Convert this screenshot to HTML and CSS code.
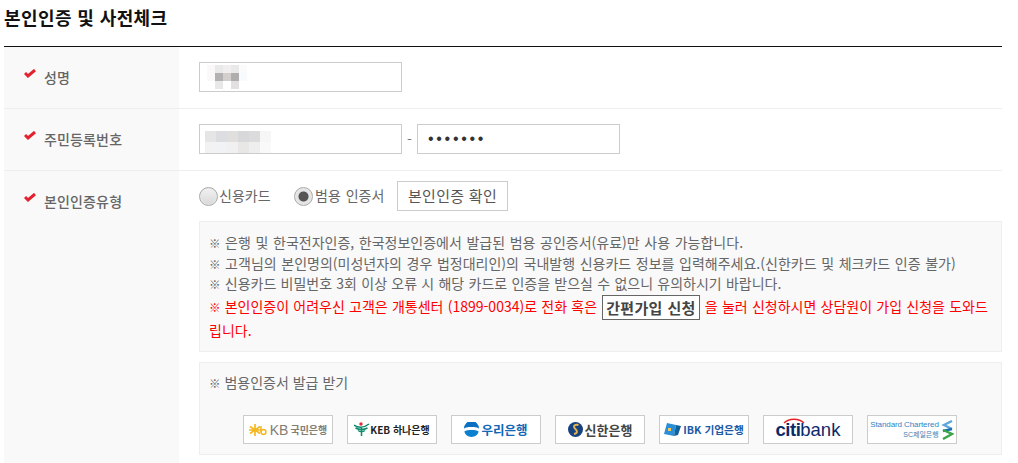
FILE: index.html
```html
<!DOCTYPE html>
<html lang="ko">
<head>
<meta charset="utf-8">
<title>본인인증 및 사전체크</title>
<link rel="stylesheet" href="styles.css">
</head>
<body>
<main class="page">
  <h2 class="title">본인인증 및 사전체크</h2>
  <section class="form">
    <div class="row row-short">
      <div class="label"><svg class="check" viewBox="0 0 12 9"><path d="M1 4l3 3L11 1" fill="none" stroke="#e2222e" stroke-width="3"/></svg><span>성명</span></div>
      <div class="field">
        <div class="input">
          <svg class="mosaic" width="54" height="24" viewBox="0 0 6 3" shape-rendering="crispEdges">
            <rect x="0" y="0" width="1" height="1" fill="#fbf8f9"/><rect x="1" y="0" width="1" height="1" fill="#e9e9ea"/><rect x="2" y="0" width="1" height="1" fill="#f0eeee"/><rect x="3" y="0" width="1" height="1" fill="#e9e9e9"/><rect x="4" y="0" width="1" height="1" fill="#fbfbfb"/>
            <rect x="0" y="1" width="1" height="1" fill="#fbf8f9"/><rect x="1" y="1" width="1" height="1" fill="#b3b1b2"/><rect x="2" y="1" width="1" height="1" fill="#d3cfcc"/><rect x="3" y="1" width="1" height="1" fill="#afadad"/><rect x="4" y="1" width="1" height="1" fill="#f7fbfd"/>
            <rect x="1" y="2" width="1" height="1" fill="#e8e8e8"/><rect x="3" y="2" width="1" height="1" fill="#e2e0e0"/>
          </svg>
        </div>
      </div>
    </div>
    <div class="row row-short">
      <div class="label"><svg class="check" viewBox="0 0 12 9"><path d="M1 4l3 3L11 1" fill="none" stroke="#e2222e" stroke-width="3"/></svg><span>주민등록번호</span></div>
      <div class="field">
        <div class="input">
          <svg class="mosaic-wide" width="66" height="22" viewBox="0 0 6 2" shape-rendering="crispEdges">
            <rect x="0" y="0" width="1" height="1" fill="#e6e5e6"/><rect x="1" y="0" width="1" height="1" fill="#dcdde1"/><rect x="2" y="0" width="1" height="1" fill="#e1dfdd"/><rect x="3" y="0" width="1" height="1" fill="#d8d8db"/><rect x="4" y="0" width="1" height="1" fill="#dbdadc"/><rect x="5" y="0" width="1" height="1" fill="#f6f6f7"/>
            <rect x="0" y="1" width="1" height="1" fill="#f3f2f3"/><rect x="1" y="1" width="1" height="1" fill="#f1f2f5"/><rect x="2" y="1" width="1" height="1" fill="#f0f0f0"/><rect x="3" y="1" width="1" height="1" fill="#e9e7e6"/><rect x="4" y="1" width="1" height="1" fill="#eeeeee"/><rect x="5" y="1" width="1" height="1" fill="#f9f9f9"/>
          </svg>
        </div>
        <span class="dash">-</span>
        <div class="input input-secret">•••••••</div>
      </div>
    </div>
    <div class="row row-tall">
      <div class="label"><svg class="check" viewBox="0 0 12 9"><path d="M1 4l3 3L11 1" fill="none" stroke="#e2222e" stroke-width="3"/></svg><span>본인인증유형</span></div>
      <div class="field-stack">
        <div class="choice">
          <label class="radio-item radio-first"><input class="radio" type="radio" name="auth"><span>신용카드</span></label>
          <label class="radio-item radio-second"><input class="radio" type="radio" name="auth" checked><span>범용 인증서</span></label>
          <button class="confirm" type="button">본인인증 확인</button>
        </div>
        <div class="notice">
          <p class="note-line"><span class="mark">※</span> 은행 및 한국전자인증, 한국정보인증에서 발급된 범용 공인증서(유료)만 사용 가능합니다.</p>
          <p class="note-line"><span class="mark">※</span> 고객님의 본인명의(미성년자의 경우 법정대리인)의 국내발행 신용카드 정보를 입력해주세요.(신한카드 및 체크카드 인증 불가)</p>
          <p class="note-line note-third"><span class="mark">※</span> 신용카드 비밀번호 3회 이상 오류 시 해당 카드로 인증을 받으실 수 없으니 유의하시기 바랍니다.</p>
          <p class="note-red"><span class="mark">※</span> 본인인증이 어려우신 고객은 개통센터 (1899-0034)로 전화 혹은 <span class="easy">간편가입 신청</span> 을 눌러 신청하시면 상담원이 가입 신청을 도와드립니다.</p>
        </div>
        <div class="issue">
          <p class="issue-title"><span class="mark">※</span> 범용인증서 발급 받기</p>
          <ul class="banks">
            <li class="bank bank-kb">
              <svg class="bank-icon" width="18" height="14" viewBox="0 0 18 14"><path d="M6 1v12M1 3.5l10 7M1 10.5l10-7M0 7h12" stroke="#f5b71f" stroke-width="1.7" fill="none"/><circle cx="14.5" cy="9" r="2.4" fill="none" stroke="#f5b71f" stroke-width="1.5"/><path d="M12 3v6" stroke="#f5b71f" stroke-width="1.5"/></svg>
              <span class="kb-mark">KB</span><b class="kb-name">국민은행</b>
            </li>
            <li class="bank bank-keb">
              <svg class="bank-icon" width="16" height="15" viewBox="0 0 16 15"><circle cx="7" cy="2" r="1.7" fill="#e0313a"/><path d="M0 3c4 3 10 3 15-1M1.500 6c4 2 8 2 12 0M7.500 5v9M4 8.500c2 1.500 5 1.500 7 0" fill="none" stroke="#0d8a6a" stroke-width="1.5"/></svg>
              <b class="keb-name">KEB 하나은행</b>
            </li>
            <li class="bank bank-woori">
              <svg class="bank-icon" width="15" height="15" viewBox="0 0 15 15"><path d="M0 6.500a7.500 7.500 0 0 1 15 0c-2-1-3-1.500-7.500-1.500S2 5.500 0 6.500z" fill="#0b6fc2"/><path d="M0.300 9.500c2-1.200 4-1.500 7.200-1.500s5.200.3 7.200 1.500a7.500 7.500 0 0 1-14.400 0z" fill="#0b7fd0"/></svg>
              <b class="woori-name">우리은행</b>
            </li>
            <li class="bank bank-shinhan">
              <svg class="bank-icon" width="15" height="15" viewBox="0 0 15 15"><circle cx="7.500" cy="7.500" r="7.500" fill="#17427f"/><path d="M10.500 3C7 2 4.500 4 7 6.500S10 11 6 12" fill="none" stroke="#e3b44c" stroke-width="1.900"/></svg>
              <b class="shinhan-name">신한은행</b>
            </li>
            <li class="bank bank-ibk">
              <svg class="bank-icon" width="17" height="14" viewBox="0 0 17 14"><path d="M3 0l9 2-2 11-10-2z" fill="#2a8fd8"/><path d="M12 2l5 1-3 9-4 1z" fill="#12619f"/><rect x="4" y="5" width="3" height="3" fill="#f0c94e"/></svg>
              <b class="ibk-name">IBK 기업은행</b>
            </li>
            <li class="bank bank-citi">
              <span class="citi-word"><span class="citi-dark">citi</span><span class="citi-light">bank</span><svg class="citi-arc" width="22" height="6" viewBox="0 0 22 6"><path d="M1 5C6 0 16 0 21 5" fill="none" stroke="#e1232b" stroke-width="1.500"/></svg></span>
            </li>
            <li class="bank bank-sc">
              <span class="sc-text"><span class="sc-en">Standard Chartered</span><span class="sc-ko">SC제일은행</span></span>
              <svg class="sc-icon" width="13" height="20" viewBox="0 0 13 20"><path d="M11 1L3 5l8 4" fill="none" stroke="#5ea6dc" stroke-width="2.400"/><path d="M2 11l9-2" fill="none" stroke="#1c6fb5" stroke-width="2.400"/><path d="M2 10l9 4-9 5" fill="none" stroke="#3ba54a" stroke-width="2.400"/></svg>
            </li>
          </ul>
        </div>
      </div>
    </div>
  </section>
</main>
</body>
</html>
```

FILE: styles.css
```css
* { box-sizing: border-box; }
html, body { margin: 0; height: 463px; overflow: hidden; background: #fff; }
body { font-family: "Noto Sans CJK KR", "Noto Sans", sans-serif; font-size: 14px; color: #666; }
.page { padding-left: 4px; width: 1002px; }
.title { margin: 0; height: 46px; padding-top: 4px; font-size: 18px; line-height: 26px; font-weight: 700; color: #111; letter-spacing: 0.4px; }
.form { border-top: 1px solid #111; }
.row { display: grid; grid-template-columns: 175px 1fr; border-bottom: 1px solid #eee; }
.row-short { height: 62px; }
.row-tall { border-bottom: 0; height: 300px; }
.label { background: #f9f9f9; display: flex; align-items: flex-start; padding: 20px 0 0 20px; font-weight: 500; color: #666; line-height: 20px; letter-spacing: 0.15px; }
.check { width: 12px; height: 9px; margin-top: 2px; margin-right: 8px; flex: none; }
.field { display: flex; align-items: center; padding: 0 0 0 20px; margin-top: -1px; }
.input { width: 203px; height: 30px; border: 1px solid #ccc; background: #fff; display: flex; align-items: center; padding-left: 4px; overflow: hidden; }
.mosaic-wide { margin: 5px 0 0 1px; }
.dash { width: 15px; text-align: center; color: #777; }
.input-secret { padding-left: 10px; color: #333; font-size: 16px; letter-spacing: 2.7px; font-family: "Liberation Sans", sans-serif; }
.field-stack { padding: 10px 0 0 20px; display: flex; flex-direction: column; }
.choice { display: flex; align-items: center; height: 30px; }
.radio-item { display: flex; align-items: center; line-height: 20px; word-spacing: 1px; }
.radio-item span { position: relative; top: -1px; }
.radio-first { width: 95px; }
.radio-second { width: 103px; }
.radio { appearance: none; margin: 0 1px 0 0; width: 19px; height: 19px; border-radius: 50%; border: 1px solid #aaa; background: linear-gradient(#f2f2f2, #d8d8d8); box-shadow: inset 0 0 0 1px #e8e8e8; }
.radio-second .radio { margin-right: 2px; }
.radio:checked { background: radial-gradient(circle, #555 0, #555 4.5px, #e4e4e4 5.5px, #e4e4e4 100%); }
.confirm { width: 111px; height: 30px; border: 1px solid #ccc; background: #fff; padding: 0; font: inherit; font-size: 15px; letter-spacing: 0.3px; color: #555; font-weight: 400; line-height: 26px; }
.notice { margin-top: 10px; height: 131px; background: #f9f9f9; border: 1px solid #eee; padding: 10px 9px 0; line-height: 20.500px; }
.mark { font-size: 11.500px; line-height: 1; }
.note-line { margin: 0; white-space: nowrap; word-spacing: 0.7px; }
.note-third { word-spacing: 0.35px; }
.note-red { margin: 0; color: #f00; line-height: 24px; word-spacing: 0.3px; }
.easy { display: inline-block; padding: 0 3px; margin: -2px 1px; height: 25px; line-height: 23px; border: 1px solid #666; background: #fff; color: #444; font-weight: 700; font-size: 15px; letter-spacing: 0.3px; vertical-align: middle; }
.issue { margin-top: 10px; height: 93px; background: #f9f9f9; border: 1px solid #eee; padding: 9px 9px 0; }
.issue-title { margin: 0; line-height: 20px; }
.banks { list-style: none; margin: 23px 0 0 34px; padding: 0; display: flex; gap: 14px; }
.bank { width: 90px; height: 29px; flex: none; background: #fff; border: 1px solid #ccc; display: flex; align-items: center; justify-content: center; gap: 2px; font-weight: 700; white-space: nowrap; }
.bank b { font-weight: 700; }
.bank-keb { gap: 0; }
.kb-mark { color: #857e72; font-size: 14px; font-weight: 400; font-family: "Liberation Sans", sans-serif; margin-left: 1px; }
.kb-name { color: #857e72; font-size: 10px; }
.keb-name { color: #222; font-size: 10px; }
.woori-name { color: #1067b7; font-size: 12.500px; }
.shinhan-name { color: #444; font-size: 13px; }
.ibk-name { color: #1d5aa5; font-size: 10.700px; }
.citi-word { position: relative; font-family: "Liberation Sans", sans-serif; font-size: 18.500px; line-height: 24px; font-weight: 400; }
.citi-dark { color: #0a2b6a; font-weight: 700; letter-spacing: -0.5px; }
.citi-light { color: #0a2b6a; font-weight: 400; }
.citi-arc { position: absolute; left: 7px; top: 0; }
.sc-text { display: flex; flex-direction: column; align-items: flex-end; font-family: "Liberation Sans", "Noto Sans CJK KR", sans-serif; font-size: 8px; line-height: 10px; color: #2e84c5; font-weight: 400; }
.sc-en { letter-spacing: -0.1px; }
.sc-ko { color: #3c7fb3; font-size: 7px; }
.sc-icon { flex: none; }
```
